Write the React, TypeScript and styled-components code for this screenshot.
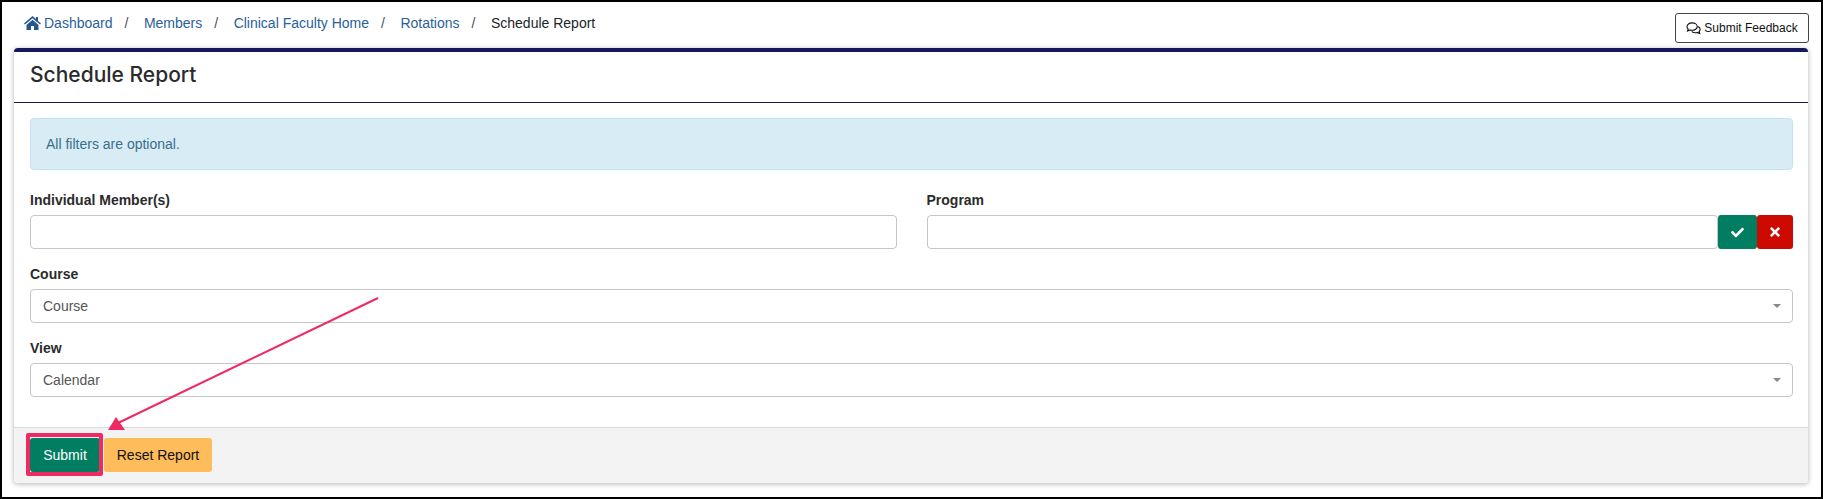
import React from "react";
import styled, { createGlobalStyle } from "styled-components";
import { FaCheck, FaTimes } from "react-icons/fa";

const Global = createGlobalStyle`
  html, body { margin: 0; padding: 0; background: #fff; }
  body { font-family: "Liberation Sans", Arial, sans-serif; font-size: 14px; color: #212529; }
  * { box-sizing: border-box; }
`;

const Frame = styled.div`
  position: relative;
  width: 1823px;
  height: 499px;
  border: 2px solid #000;
  padding: 0 12px 0 12px;
  overflow: hidden;
`;

const TopBar = styled.div`
  display: flex;
  justify-content: space-between;
  height: 46px;
  padding: 11px 0 0 10px;
`;

const Crumbs = styled.nav`
  display: flex;
  align-items: center;
  height: 20px;
  line-height: 20px;
  font-size: 14px;
`;

const CrumbLink = styled.span`
  display: inline-flex;
  align-items: center;
  color: #2a5f98;
`;

const CrumbCurrent = styled.span`
  color: #212529;
`;

const Separator = styled.span`
  color: #495057;
  margin: 0 15.5px 0 12px;
`;

const HomeIcon = styled.svg`
  width: 17px;
  height: 14px;
  margin-right: 3px;
  fill: #23578f;
`;

const FeedbackButton = styled.button`
  display: flex;
  align-items: center;
  justify-content: center;
  gap: 3px;
  width: 134px;
  height: 30px;
  background: #fff;
  border: 1px solid #444;
  border-radius: 3px;
  padding: 0;
  font: 12px "Liberation Sans", Arial, sans-serif;
  color: #111;
`;

const FeedbackIcon = styled.svg`
  width: 15px;
  height: 13px;
  fill: none;
  stroke: #111;
  stroke-width: 1.2;
`;

const Card = styled.section`
  width: 1794px;
  height: 435px;
  background: #fff;
  border-top: 4px solid #17175e;
  border-radius: 4px;
  box-shadow: 0 1px 4px 1px rgba(0, 0, 0, 0.22);
  display: flex;
  flex-direction: column;
`;

const CardHeader = styled.header`
  height: 51px;
  border-bottom: 1px solid #17175e;
  padding: 0 16px 6px;
  display: flex;
  align-items: center;
`;

const Title = styled.h1`
  margin: 0;
  font: 500 21px "Inter", sans-serif;
  color: #2b2b2b;
`;

const CardBody = styled.div`
  flex: 1;
  padding: 15px 15px 0 16px;
`;

const Alert = styled.div`
  height: 52px;
  width: 1763px;
  background: #d8ecf5;
  border: 1px solid #bfe5f1;
  border-radius: 4px;
  padding: 0 15px;
  display: flex;
  align-items: center;
  color: #3a6f8c;
  font-size: 14px;
  margin-bottom: 20px;
`;

const Row = styled.div`
  display: grid;
  grid-template-columns: 866.5px 866.5px;
  column-gap: 30px;
  width: 1763px;
`;

const Field = styled.div`
  margin-bottom: 15px;
  width: 1763px;
`;

const GridField = styled(Field)`
  width: auto;
`;

const Label = styled.label`
  display: block;
  height: 20px;
  line-height: 20px;
  margin-bottom: 5px;
  font-weight: 700;
  font-size: 14px;
  color: #2b2b2b;
`;

const Input = styled.div`
  flex: 1;
  height: 34px;
  background: #fff;
  border: 1px solid #c6c6c6;
  border-radius: 4px;
`;

const InputGroup = styled.div`
  display: flex;
  height: 34px;
`;

const IconButton = styled.button<{ $bg: string; $w: number }>`
  width: ${(p) => p.$w}px;
  height: 34px;
  padding: 0;
  border: 0;
  border-radius: 3px;
  background: ${(p) => p.$bg};
  color: #fff;
  display: flex;
  align-items: center;
  justify-content: center;
  font-size: 13px;
`;

const Select = styled.div`
  height: 34px;
  border: 1px solid #c6c6c6;
  border-radius: 4px;
  background: #fff;
  padding: 0 12px;
  display: flex;
  align-items: center;
  justify-content: space-between;
  color: #555;
  font-size: 14px;
`;

const Caret = styled.span`
  width: 0;
  height: 0;
  border-left: 4px solid transparent;
  border-right: 4px solid transparent;
  border-top: 4px solid #888;
  margin-right: -1px;
`;

const CardFooter = styled.footer`
  height: 56px;
  background: #f3f3f3;
  border-top: 1px solid #dcdcdc;
  border-radius: 0 0 4px 4px;
  padding: 10px 16px;
  display: flex;
  gap: 4px;
`;

const Action = styled.button<{ $bg: string; $fg: string; $w: number; $marked?: boolean }>`
  position: relative;
  width: ${(p) => p.$w}px;
  height: 34px;
  padding: 0;
  border: 0;
  border-radius: 3px;
  background: ${(p) => p.$bg};
  color: ${(p) => p.$fg};
  font: 14px "Liberation Sans", Arial, sans-serif;
  ${(p) =>
    p.$marked
      ? `&::after {
          content: "";
          position: absolute;
          inset: -5px -3px -4px -4px;
          border: 4px solid #ef2a63;
          border-radius: 2px;
        }`
      : ""}
`;

const Arrow = styled.svg`
  position: absolute;
  left: -2px;
  top: -2px;
  pointer-events: none;
`;

export default function App() {
  return (
    <Frame>
      <Global />
      <TopBar>
        <Crumbs>
          <CrumbLink>
            <HomeIcon viewBox="0 0 17 14">
              <path d="M8.5 0 L0 7.5 L1 8.6 L8.5 2.2 L16 8.6 L17 7.5 L14 4.9 V1 H12 V3.1 Z" />
              <path d="M2.5 9 L8.5 3.8 L14.5 9 V14 H10 V10 H7 V14 H2.5 Z" />
            </HomeIcon>
            Dashboard
          </CrumbLink>
          <Separator>/</Separator>
          <CrumbLink>Members</CrumbLink>
          <Separator>/</Separator>
          <CrumbLink>Clinical Faculty Home</CrumbLink>
          <Separator>/</Separator>
          <CrumbLink>Rotations</CrumbLink>
          <Separator>/</Separator>
          <CrumbCurrent>Schedule Report</CrumbCurrent>
        </Crumbs>
        <FeedbackButton>
          <FeedbackIcon viewBox="0 0 16 14">
            <path d="M6.5 1 C3.4 1 1 2.8 1 5 C1 6 1.5 6.9 2.3 7.6 L1.6 9.6 L4.3 8.5 C5 8.8 5.7 8.9 6.5 8.9 C9.5 8.9 12 7.1 12 5 C12 2.8 9.5 1 6.5 1 Z" />
            <path d="M12.6 4.8 C14.2 5.4 15.2 6.5 15.2 7.9 C15.2 8.8 14.8 9.6 14 10.2 L14.6 12.3 L12 11.2 C11.3 11.5 10.6 11.6 9.9 11.6 C8.4 11.6 7 11 6.2 10" />
          </FeedbackIcon>
          Submit Feedback
        </FeedbackButton>
      </TopBar>
      <Card>
        <CardHeader>
          <Title>Schedule Report</Title>
        </CardHeader>
        <CardBody>
          <Alert>All filters are optional.</Alert>
          <Row>
            <GridField>
              <Label>Individual Member(s)</Label>
              <InputGroup>
                <Input />
              </InputGroup>
            </GridField>
            <GridField>
              <Label>Program</Label>
              <InputGroup>
                <Input />
                <IconButton $bg="#017d61" $w={39}>
                  <FaCheck />
                </IconButton>
                <IconButton $bg="#cc0a00" $w={36}>
                  <FaTimes size={14} />
                </IconButton>
              </InputGroup>
            </GridField>
          </Row>
          <Field>
            <Label>Course</Label>
            <Select>
              Course
              <Caret />
            </Select>
          </Field>
          <Field>
            <Label>View</Label>
            <Select>
              Calendar
              <Caret />
            </Select>
          </Field>
        </CardBody>
        <CardFooter>
          <Action $bg="#017d61" $fg="#fff" $w={70} $marked>
            Submit
          </Action>
          <Action $bg="#ffbc5a" $fg="#111" $w={108}>
            Reset Report
          </Action>
        </CardFooter>
      </Card>
      <Arrow width="1823" height="499" viewBox="0 0 1823 499">
        <line x1="378" y1="298" x2="118" y2="423" stroke="#ef2a63" strokeWidth="2" />
        <polygon points="108,430 125,430 116,417" fill="#ef2a63" />
      </Arrow>
    </Frame>
  );
}
